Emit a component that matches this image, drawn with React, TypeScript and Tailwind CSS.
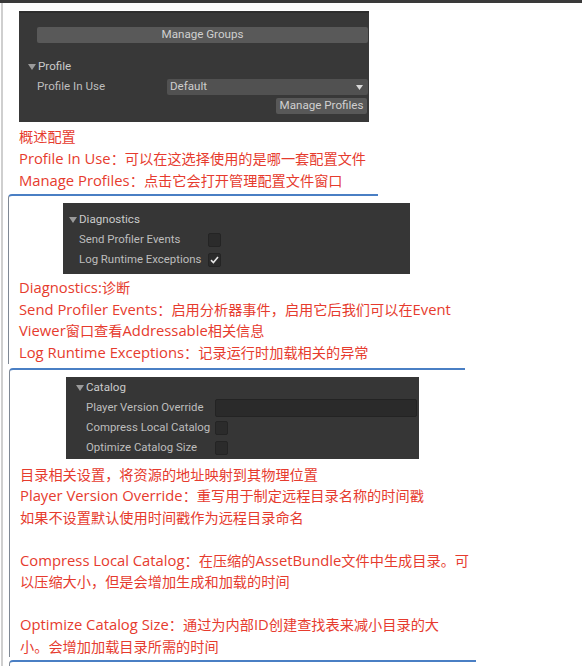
import React from 'react';

const noteFont = { fontFamily: "'Open Sans', 'Noto Sans CJK SC', sans-serif" };
const unityFont = { fontFamily: "Roboto, 'Noto Sans', sans-serif" };

function Fold() {
    return (
        <svg width="8" height="6" viewBox="0 0 8 6" className="shrink-0">
            <path d="M0 0 L8 0 L4 6 Z" fill="#9a9a9a" />
        </svg>
    );
}

function Checkbox({ checked = false }: { checked?: boolean }) {
    return (
        <div className="w-[13px] h-[14px] rounded-[2px] bg-[#2b2b2b] border border-[#242424] flex items-center justify-center">
            {checked && (
                <svg width="9" height="8" viewBox="0 0 9 8">
                    <path d="M1 4.2 L3.4 6.5 L8 1" stroke="#e6e6e6" strokeWidth="1.6" fill="none" />
                </svg>
            )}
        </div>
    );
}

function Row({ label, children, labelLeft }: { label: string; children?: React.ReactNode; labelLeft: number }) {
    return (
        <div className="h-[20px] flex items-center text-[11.4px] text-[#bdbdbd]">
            <span style={{ width: labelLeft }} className="shrink-0" />
            <span className="w-[129px] shrink-0 whitespace-nowrap">{label}</span>
            {children}
        </div>
    );
}

// latin parts of the notes run a little wider than the CJK
function L({ children }: { children: React.ReactNode }) {
    return <span className="text-[14.8px] leading-[0]">{children}</span>;
}

function Note({ children, className = '' }: { children: React.ReactNode; className?: string }) {
    return (
        <div className={`text-[14.2px] text-[#e63b2e] whitespace-nowrap ${className}`} style={noteFont}>
            {children}
        </div>
    );
}

export default function App() {
    return (
        <div className="w-[582px] h-[666px] bg-white overflow-hidden flex flex-col">
            <div className="h-[3px] bg-[#3a3a3a] shrink-0" />
            <div className="flex-1 ml-[1px] border-l-2 border-[#cfcfcf] flex flex-col">
                {/* Profile panel */}
                <div className="pl-[16px] pt-[8px]">
                    <div className="w-[350px] h-[111px] bg-[#383838] border-t-2 border-[#2e2e2e] flex flex-col" style={unityFont}>
                        <div className="mt-[14px] h-[16px] ml-[18px] mr-[1px] rounded-[2px] bg-[#595959] flex items-center justify-center text-[11.6px] text-[#d0d0d0]">
                            Manage Groups
                        </div>
                        <div className="mt-[16px] h-[16px] flex items-center gap-[2px] pl-[9px] text-[11.6px] text-[#cacaca]">
                            <Fold />
                            <span>Profile</span>
                        </div>
                        <div className="mt-[4px] h-[16px] flex items-center text-[11.6px] text-[#bdbdbd]">
                            <span className="pl-[18px] w-[148px] shrink-0">Profile In Use</span>
                            <div className="flex-1 mr-[1px] h-[16px] rounded-[2px] bg-[#515151] flex items-center justify-between pl-[3px] pr-[5px] text-[#cdcdcd]">
                                <span>Default</span>
                                <svg width="7" height="5" viewBox="0 0 7 5">
                                    <path d="M0 0 L7 0 L3.5 5 Z" fill="#d8d8d8" />
                                </svg>
                            </div>
                        </div>
                        <div className="mt-[3px] flex justify-end pr-[2px]">
                            <div className="h-[16px] w-[91px] rounded-[2px] bg-[#585858] flex items-center justify-center text-[11.6px] text-[#d0d0d0]">
                                Manage Profiles
                            </div>
                        </div>
                    </div>
                    <Note className="mt-[4px] leading-[22px]">
                        概述配置<br />
                        <L>Profile In Use</L>：可以在这选择使用的是哪一套配置文件<br />
                        <L>Manage Profiles</L>：点击它会打开管理配置文件窗口
                    </Note>
                </div>

                {/* Diagnostics */}
                <div className="mt-[2px] ml-[5px] w-[370px] border-t-2 border-l border-t-[#4a7fc4] border-l-[#7f8894] rounded-tl-[4px]">
                    <div className="pl-[54px] pt-[7px]">
                        <div className="w-[347px] h-[71px] bg-[#363636] pt-[7px]" style={unityFont}>
                            <div className="h-[20px] flex items-center gap-[2px] pl-[6px] text-[11.6px] text-[#cacaca]">
                                <Fold />
                                <span>Diagnostics</span>
                            </div>
                            <Row label="Send Profiler Events" labelLeft={16}><Checkbox /></Row>
                            <Row label="Log Runtime Exceptions" labelLeft={16}><Checkbox checked /></Row>
                        </div>
                    </div>
                    <Note className="mt-[3px] pl-[10px] leading-[21.7px]">
                        <L>Diagnostics:</L>诊断<br />
                        <L>Send Profiler Events</L>：启用分析器事件，启用它后我们可以在<L>Event</L><br />
                        <L>Viewer</L>窗口查看<L>Addressable</L>相关信息<br />
                        <L>Log Runtime Exceptions</L>：记录运行时加载相关的异常
                    </Note>
                </div>

                {/* Catalog */}
                <div className="mt-[4px] ml-[6px] w-[456px] border-t-2 border-l border-t-[#4a7fc4] border-l-[#7f8894] rounded-tl-[4px]">
                    <div className="pl-[56px] pt-[7px]">
                        <div className="w-[353px] h-[82px] bg-[#363636] pt-[1px]" style={unityFont}>
                            <div className="h-[20px] flex items-center gap-[2px] pl-[10px] text-[11.6px] text-[#cacaca]">
                                <Fold />
                                <span>Catalog</span>
                            </div>
                            <Row label="Player Version Override" labelLeft={20}>
                                <div className="w-[202px] h-[18px] rounded-[2px] bg-[#2a2a2a] border border-[#232323]" />
                            </Row>
                            <Row label="Compress Local Catalog" labelLeft={20}><Checkbox /></Row>
                            <Row label="Optimize Catalog Size" labelLeft={20}><Checkbox /></Row>
                        </div>
                    </div>
                    <Note className="mt-[5px] pl-[10px] leading-[21.5px]">
                        目录相关设置，将资源的地址映射到其物理位置<br />
                        <L>Player Version Override</L>：重写用于制定远程目录名称的时间戳<br />
                        如果不设置默认使用时间戳作为远程目录命名<br />
                        <br />
                        <L>Compress Local Catalog</L>：在压缩的<L>AssetBundle</L>文件中生成目录。可<br />
                        以压缩大小，但是会增加生成和加载的时间<br />
                        <br />
                        <L>Optimize Catalog Size</L>：通过为内部<L>ID</L>创建查找表来减小目录的大<br />
                        小。会增加加载目录所需的时间
                    </Note>
                </div>

                <div className="mt-[3px] ml-[6px] w-[467px] flex-1 border-t-2 border-l border-t-[#4a7fc4] border-l-[#7f8894] rounded-tl-[4px]" />
            </div>
        </div>
    );
}
